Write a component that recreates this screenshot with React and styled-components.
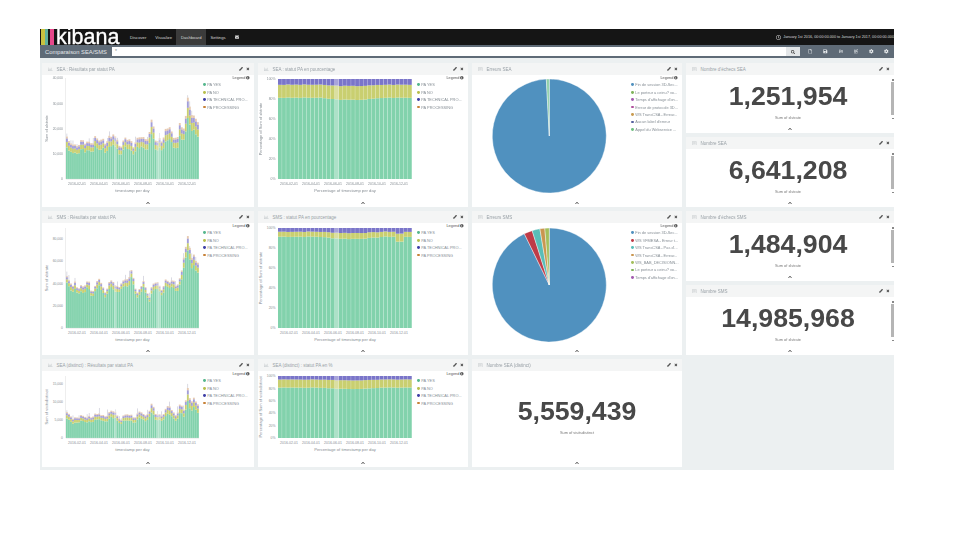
import React from "react";
import styled, { createGlobalStyle } from "styled-components";
import {
  FaChevronUp, FaCog, FaEnvelope, FaInfoCircle, FaPencilAlt, FaRegClock, FaRegFile,
  FaRegFolderOpen, FaRegShareSquare, FaSave, FaSearch, FaTimes, FaRegChartBar, FaRegListAlt,
} from "react-icons/fa";

const Global = createGlobalStyle`
  html, body { margin: 0; padding: 0; background: #fff; }
  body { font-family: "Liberation Sans", Arial, sans-serif; }
`;

const Page = styled.div`
  width: 854px;
  margin-left: 40px;
  padding-top: 29px;
  overflow: hidden;
  filter: blur(0.3px);
`;

const Nav = styled.div`
  height: 16px;
  background: #151515;
  display: flex;
  align-items: stretch;
  color: #d8d8d8;
  font-size: 4.2px;
`;

const Logo = styled.div`
  width: 85.5px;
  display: flex;
  align-items: flex-end;
  padding-left: 1px;
  box-sizing: border-box;
`;

const LogoBar = styled.span`
  width: ${(p) => p.$w}px;
  height: 16px;
  margin-right: ${(p) => p.$gap}px;
  background: ${(p) => p.$color};
`;

const LogoText = styled.span`
  color: #fff;
  font-size: 21.5px;
  line-height: 18px;
  height: 18px;
  margin-left: 2px;
  margin-bottom: -1px;
  position: relative;
  -webkit-text-stroke: 0.35px #fff;
`;

const NavItem = styled.div`
  display: flex;
  align-items: center;
  padding: 0 4.5px;
  background: ${(p) => (p.$active ? "#3b3b3b" : "transparent")};
`;

const TimeRange = styled.div`
  margin-left: auto;
  display: flex;
  align-items: center;
  gap: 2px;
  white-space: nowrap;
  font-size: 3.75px;
  svg { flex: none; }
`;

const SubBar = styled.div`
  height: 13px;
  background: #5f6b77;
  display: flex;
  align-items: center;
  color: #e3e6e9;
`;

const DashName = styled.div`
  width: 72px;
  padding-left: 5px;
  box-sizing: border-box;
  font-size: 5.8px;
  white-space: nowrap;
`;

const SearchInput = styled.div`
  width: 674px;
  height: 9px;
  background: #fff;
  color: #888;
  font-size: 5px;
  line-height: 9px;
  padding-left: 3px;
  box-sizing: border-box;
`;

const SearchButton = styled.div`
  width: 14px;
  height: 9px;
  background: #e4e7e9;
  color: #333;
  display: flex;
  align-items: center;
  justify-content: center;
  font-size: 4px;
`;

const ToolIcons = styled.div`
  flex: 1;
  display: flex;
  justify-content: space-around;
  align-items: center;
  padding-left: 3px;
  font-size: 4.6px;
  color: #e9ecee;
`;

const Dashboard = styled.div`
  background: #ecf0f1;
  padding: 5px 0 3px 2px;
  display: grid;
  grid-template-columns: 212px 210px 210px 208px;
  grid-template-rows: 144px 144px 108px;
  gap: 4px;
`;

const Stack = styled.div`
  display: flex;
  flex-direction: column;
  gap: 4px;
`;

const Card = styled.div`
  position: relative;
  background: #fff;
  display: flex;
  flex-direction: column;
  height: ${(p) => (p.$short ? "70px" : "auto")};
  overflow: hidden;
`;

const Header = styled.div`
  height: 12px;
  flex: none;
  background: #f4f5f5;
  color: #979fa5;
  font-size: 4.5px;
  display: flex;
  align-items: center;
  gap: 4px;
  padding: 0 4px 0 6px;
`;

const HeaderIcon = styled.span`
  color: #c4c9cc;
  font-size: 4.6px;
  display: flex;
`;

const Actions = styled.div`
  margin-left: auto;
  display: flex;
  gap: 3px;
  color: #333;
  font-size: 3.8px;
`;

const Body = styled.div`
  flex: 1;
  display: flex;
  min-height: 0;
`;

const ChartBox = styled.div`
  flex: 1;
  min-width: 0;
`;

const Legend = styled.div`
  width: 52px;
  flex: none;
  font-size: 3.9px;
  color: #868e95;
  box-sizing: border-box;
  padding-right: 4px;
`;

const LegendTitle = styled.div`
  text-align: right;
  color: #555;
  line-height: 6px;
  display: flex;
  justify-content: flex-end;
  align-items: center;
  gap: 1px;
`;

const LegendRow = styled.div`
  display: flex;
  align-items: center;
  gap: 1.5px;
  height: 7.45px;
  padding-left: 1px;
  white-space: nowrap;
`;

const Dot = styled.span`
  width: 2.8px;
  height: 2.8px;
  border-radius: 50%;
  background: ${(p) => p.$color};
  flex: none;
`;

const Footer = styled.div`
  height: 9px;
  flex: none;
  display: flex;
  align-items: center;
  justify-content: center;
  font-size: 4px;
  color: #333;
`;

const Metric = styled.div`
  flex: 1;
  text-align: center;
  padding-top: ${(p) => p.$top}px;
  padding-right: ${(p) => (p.$narrow ? 4 : 0)}px;
`;

const MetricValue = styled.div`
  font-size: 26.7px;
  font-weight: 700;
  line-height: 26px;
  color: #484848;
`;

const MetricLabel = styled.div`
  font-size: 3.9px;
  line-height: 6px;
  margin-top: 6px;
  color: #777;
`;

const Scrollbar = styled.div`
  position: absolute;
  right: 0;
  top: 19px;
  bottom: 18px;
  width: 3px;
  background: #b5b5b5;
  &::before, &::after {
    content: "";
    position: absolute;
    left: 0.5px;
    width: 2px;
    height: 1.5px;
    background: #888;
  }
  &::before { top: -3px; }
  &::after { bottom: -4px; }
`;

const axisColor = "#878e94";
const green = "#82d2ac";
const yellow = "#c9cf70";
const purple = "#7a75c9";
const orange = "#c98a52";

function seeded(seed) {
  let s = seed;
  return () => {
    s = (s * 9301 + 49297) % 233280;
    return s / 233280;
  };
}

function lerpCurve(points, x) {
  for (let i = 1; i < points.length; i++) {
    if (x <= points[i][0]) {
      const [x0, y0] = points[i - 1];
      const [x1, y1] = points[i];
      return y0 + ((y1 - y0) * (x - x0)) / (x1 - x0);
    }
  }
  return points[points.length - 1][1];
}

// tops read off the reference, as [fraction of width, fraction of plot height]
const seaCurve = [[0, 0.41], [0.05, 0.32], [0.09, 0.39], [0.16, 0.35], [0.22, 0.42], [0.26, 0.37], [0.31, 0.42],
  [0.36, 0.44], [0.41, 0.33], [0.45, 0.41], [0.51, 0.36], [0.55, 0.43], [0.6, 0.39], [0.65, 0.58], [0.68, 0.36],
  [0.72, 0.4], [0.78, 0.54], [0.82, 0.4], [0.87, 0.55], [0.9, 0.45], [0.92, 0.85], [0.96, 0.65], [1, 0.58]];
const smsCurve = [[0, 0.52], [0.04, 0.43], [0.09, 0.46], [0.13, 0.39], [0.16, 0.49], [0.2, 0.39], [0.25, 0.49],
  [0.29, 0.39], [0.34, 0.46], [0.38, 0.39], [0.42, 0.49], [0.46, 0.46], [0.5, 0.57], [0.54, 0.35], [0.58, 0.46],
  [0.63, 0.35], [0.68, 0.46], [0.72, 0.42], [0.76, 0.5], [0.8, 0.46], [0.86, 0.46], [0.89, 0.66], [0.92, 0.89],
  [0.96, 0.79], [1, 0.62]];

const dates = ["2016-02-01", "2016-04-01", "2016-06-01", "2016-08-01", "2016-10-01", "2016-12-01"];

function BarChart({ curve, seed, ticks, yTitle, plotTop, plotBottom, scale, share, height }) {
  const rand = seeded(seed);
  const left = 24;
  const width = 133;
  const n = 66;
  const plotH = plotBottom - plotTop;
  const bars = [];
  for (let i = 0; i < n; i++) {
    const f = i / (n - 1);
    const dip = i % 7 >= 5 ? 0.9 : 1;
    const total = lerpCurve(curve, f) * (0.96 + rand() * 0.1) * dip * plotH * scale;
    const spike = rand() > 0.8 ? 1.5 + rand() * 5 : 0;
    const x = left + (i * width) / n;
    const w = width / n - 0.15;
    const pale = i === 24 || i === 45 || i === 46;
    const g = total * (share + rand() * 0.04);
    const rest = total - g;
    const ye = rest * 0.5;
    const pu = rest * 0.32;
    bars.push(
      <g key={i} opacity={pale ? 0.65 : 1}>
        <rect x={x} y={plotBottom - g} width={w} height={g} fill={green} />
        <rect x={x} y={plotBottom - g - ye} width={w} height={ye} fill={yellow} />
        <rect x={x} y={plotBottom - g - ye - pu} width={w} height={pu} fill={purple} opacity="0.7" />
        <rect x={x} y={plotBottom - total} width={w} height={rest - ye - pu} fill={orange} opacity="0.45" />
        {spike > 0 && <rect x={x + w / 2 - 0.2} y={plotBottom - total - spike} width={0.4} height={spike} fill="#a3a3b8" />}
      </g>
    );
  }
  return (
    <svg width="160" height={height}>
      {bars}
      <line x1={left - 0.5} x2={left - 0.5} y1={plotTop} y2={plotBottom} stroke="#ddd" strokeWidth="0.5" />
      <line x1={left} x2={left + width} y1={plotBottom + 0.3} y2={plotBottom + 0.3} stroke="#ddd" strokeWidth="0.5" />
      {ticks.map(([label, y]) => (
        <text key={label} x={left - 3} y={y + 1.2} fontSize="3.4" fill={axisColor} textAnchor="end">{label}</text>
      ))}
      {dates.map((d, i) => (
        <text key={d} x={left + 11 + i * 22} y={plotBottom + 6} fontSize="3.5" fill={axisColor} textAnchor="middle">{d}</text>
      ))}
      <text x={left + width / 2} y={plotBottom + 12.5} fontSize="4.2" fill={axisColor} textAnchor="middle">timestamp per day</text>
      <text transform={`translate(6 ${(plotTop + plotBottom) / 2}) rotate(-90)`} fontSize="4" fill={axisColor} textAnchor="middle">{yTitle}</text>
    </svg>
  );
}

function PercentChart({ seed, greenTop, yellowTop, dip, yTitle, plotTop, plotBottom, height }) {
  const rand = seeded(seed);
  const left = 20;
  const width = 134;
  const n = 33;
  const plotH = plotBottom - plotTop;
  const bars = [];
  for (let i = 0; i < n; i++) {
    const f = i / (n - 1);
    const sag = f > 0.3 && f < 0.8 ? 0.022 * Math.sin(((f - 0.3) / 0.5) * Math.PI) : 0;
    const hole = dip && i >= 29 && i <= 30 ? 0.05 : 0;
    const g = (greenTop - sag - hole + rand() * 0.006) * plotH;
    const ye = (yellowTop - greenTop + sag * 0.4 + hole * 0.6) * plotH;
    const x = left + (i * width) / n;
    const w = width / n - 0.25;
    bars.push(
      <g key={i} opacity={i === 14 ? 0.65 : 1}>
        <rect x={x} y={plotBottom - g} width={w} height={g} fill={green} />
        <rect x={x} y={plotBottom - g - ye} width={w} height={ye} fill={yellow} />
        <rect x={x} y={plotTop} width={w} height={plotH - g - ye} fill={purple} />
      </g>
    );
  }
  return (
    <svg width="158" height={height}>
      {bars}
      {["0%", "20%", "40%", "60%", "80%", "100%"].map((t, i) => (
        <text key={t} x={left - 2.5} y={plotBottom - (i * plotH) / 5 + 1.2} fontSize="3.4" fill={axisColor} textAnchor="end">{t}</text>
      ))}
      {dates.map((d, i) => (
        <text key={d} x={left + 11 + i * 22} y={plotBottom + 6} fontSize="3.5" fill={axisColor} textAnchor="middle">{d}</text>
      ))}
      <text x={left + width / 2} y={plotBottom + 12.5} fontSize="4.2" fill={axisColor} textAnchor="middle">Percentage of timestamp per day</text>
      <text transform={`translate(3.5 ${(plotTop + plotBottom) / 2}) rotate(-90)`} fontSize="4" fill={axisColor} textAnchor="middle">{yTitle}</text>
    </svg>
  );
}

function slicePath(cx, cy, r, from, to) {
  const pt = (a) => [cx + r * Math.sin((a * Math.PI) / 180), cy - r * Math.cos((a * Math.PI) / 180)];
  const [x0, y0] = pt(from);
  const [x1, y1] = pt(to);
  return `M${cx} ${cy}L${x0} ${y0}A${r} ${r} 0 ${to - from > 180 ? 1 : 0} 1 ${x1} ${y1}Z`;
}

function Pie({ slices, cy }) {
  let angle = 0;
  return (
    <svg width="158" height="123">
      {slices.map(([deg, color]) => {
        const d = slicePath(77.3, cy, 57, angle, angle + deg);
        angle += deg;
        return <path key={color} d={d} fill={color} stroke="#fff" strokeWidth="0.4" />;
      })}
    </svg>
  );
}

function ChartLegend({ items }) {
  return (
    <Legend>
      <LegendTitle>Legend <FaInfoCircle size={3.6} /></LegendTitle>
      {items.map(([label, color]) => (
        <LegendRow key={label}><Dot $color={color} />{label}</LegendRow>
      ))}
    </Legend>
  );
}

function Panel({ title, icon, short, children, scroll }) {
  return (
    <Card $short={short}>
      <Header>
        <HeaderIcon>{icon}</HeaderIcon>
        {title}
        <Actions><FaPencilAlt /><FaTimes /></Actions>
      </Header>
      <Body>{children}</Body>
      <Footer><FaChevronUp /></Footer>
      {scroll && <Scrollbar />}
    </Card>
  );
}

const statusLegend = [
  ["PA YES", "#55b78d"],
  ["PA NO", "#b8bf4c"],
  ["PA TECHNICAL PRO...", "#3e3fa6"],
  ["PA PROCESSING", "#c78238"],
];

const seaPieLegend = [
  ["Fin de session 3D-Sec...", "#5091bf"],
  ["Le porteur a ceinu? vo...", "#7fb35a"],
  ["Temps d'affichage d'on...", "#a35bb0"],
  ["Erreur de protocole 3D...", "#b04f9c"],
  ["WS TransCSA - Erreur...", "#c99b50"],
  ["Aucun label d'erreur", "#56609f"],
  ["Appel du Webservice ...", "#6fbf80"],
];

const smsPieLegend = [
  ["Fin de session 3D-Sec...", "#5091bf"],
  ["WS VFMESA - Erreur t...", "#bf3b47"],
  ["WS TransCSA - Pas d'...", "#59bdb8"],
  ["WS TransCSA - Erreur...", "#c99650"],
  ["WS_BAB_DECISIONN...", "#a3bf5c"],
  ["Le porteur a ceinu? vo...", "#7fb35a"],
  ["Temps d'affichage d'on...", "#a35bb0"],
];

const barIcon = <FaRegChartBar />;
const pieIcon = <FaRegListAlt />;

function MetricPanel({ title, value, label, top = 8, short = true, scroll = true }) {
  return (
    <Panel title={title} icon={pieIcon} short={short} scroll={scroll}>
      <Metric $top={top} $narrow={scroll}>
        <MetricValue>{value}</MetricValue>
        <MetricLabel>{label}</MetricLabel>
      </Metric>
    </Panel>
  );
}

export default function App() {
  return (
    <Page>
      <Global />
      <Nav>
        <Logo>
          <LogoBar $w={3.5} $gap={0.5} $color="#c9c23f" />
          <LogoBar $w={3} $gap={1.5} $color="#5fb39c" />
          <LogoBar $w={4.5} $gap={0} $color="#e8488b" />
          <LogoText>kibana</LogoText>
        </Logo>
        <NavItem>Discover</NavItem>
        <NavItem>Visualize</NavItem>
        <NavItem $active>Dashboard</NavItem>
        <NavItem>Settings</NavItem>
        <NavItem><FaEnvelope /></NavItem>
        <TimeRange><FaRegClock size={5} />January 1st 2016, 00:00:00.000 to January 1st 2017, 00:00:00.000</TimeRange>
      </Nav>
      <SubBar>
        <DashName>Comparaison SEA/SMS</DashName>
        <SearchInput>*</SearchInput>
        <SearchButton><FaSearch /></SearchButton>
        <ToolIcons>
          <FaRegFile /><FaSave /><FaRegFolderOpen /><FaRegShareSquare /><FaCog /><FaCog />
        </ToolIcons>
      </SubBar>
      <Dashboard>
        <Panel title="SEA : Résultats par statut PA" icon={barIcon}>
          <ChartBox>
            <BarChart curve={seaCurve} seed={11} scale={1} share={0.74} height={123} plotTop={3} plotBottom={104}
              yTitle="Sum of xlstrate"
              ticks={[["40,000", 3], ["30,000", 29], ["20,000", 54], ["10,000", 79], ["0", 104]]} />
          </ChartBox>
          <ChartLegend items={statusLegend} />
        </Panel>
        <Panel title="SEA : statut PA en pourcentage" icon={barIcon}>
          <ChartBox>
            <PercentChart seed={3} greenTop={0.81} yellowTop={0.94} height={123} plotTop={4} plotBottom={104}
              yTitle="Percentage of Sum of xlstrate" />
          </ChartBox>
          <ChartLegend items={statusLegend} />
        </Panel>
        <Panel title="Erreurs SEA" icon={pieIcon}>
          <ChartBox><Pie cy={61} slices={[[357, "#5091bf"], [3, "#8fcfa8"]]} /></ChartBox>
          <ChartLegend items={seaPieLegend} />
        </Panel>
        <Stack>
          <MetricPanel title="Nombre d'échecs SEA" value="1,251,954" label="Sum of xlstrate" />
          <MetricPanel title="Nombre SEA" value="6,641,208" label="Sum of xlstrate" />
        </Stack>

        <Panel title="SMS : Résultats par statut PA" icon={barIcon}>
          <ChartBox>
            <BarChart curve={smsCurve} seed={29} scale={1} share={0.84} height={123} plotTop={5} plotBottom={105}
              yTitle="Sum of xlstrate"
              ticks={[["80,000", 16], ["60,000", 38], ["40,000", 60.5], ["20,000", 83], ["0", 105]]} />
          </ChartBox>
          <ChartLegend items={statusLegend} />
        </Panel>
        <Panel title="SMS : statut PA en pourcentage" icon={barIcon}>
          <ChartBox>
            <PercentChart seed={7} greenTop={0.91} yellowTop={0.96} dip height={123} plotTop={5} plotBottom={105}
              yTitle="Percentage of Sum of xlstrate" />
          </ChartBox>
          <ChartLegend items={statusLegend} />
        </Panel>
        <Panel title="Erreurs SMS" icon={pieIcon}>
          <ChartBox>
            <Pie cy={62} slices={[[334, "#5091bf"], [8.5, "#bf3b47"], [8, "#59bdb8"], [5, "#c99650"], [4.5, "#a3bf5c"]]} />
          </ChartBox>
          <ChartLegend items={smsPieLegend} />
        </Panel>
        <Stack>
          <MetricPanel title="Nombre d'échecs SMS" value="1,484,904" label="Sum of xlstrate" />
          <MetricPanel title="Nombre SMS" value="14,985,968" label="Sum of xlstrate" />
        </Stack>

        <Panel title="SEA (distinct) : Résultats par statut PA" icon={barIcon}>
          <ChartBox>
            <BarChart curve={seaCurve} seed={17} scale={0.97} share={0.74} height={87} plotTop={5} plotBottom={67}
              yTitle="Sum of visitsdistinct"
              ticks={[["15,000", 13], ["10,000", 31], ["5,000", 49], ["0", 67]]} />
          </ChartBox>
          <ChartLegend items={statusLegend} />
        </Panel>
        <Panel title="SEA (distinct) : statut PA en %" icon={barIcon}>
          <ChartBox>
            <PercentChart seed={5} greenTop={0.81} yellowTop={0.94} height={87} plotTop={5} plotBottom={67}
              yTitle="Percentage of Sum of visitsdistinct" />
          </ChartBox>
          <ChartLegend items={statusLegend} />
        </Panel>
        <MetricPanel title="Nombre SEA (distinct)" value="5,559,439" label="Sum of visitsdistinct" top={27} short={false} scroll={false} />
      </Dashboard>
    </Page>
  );
}
